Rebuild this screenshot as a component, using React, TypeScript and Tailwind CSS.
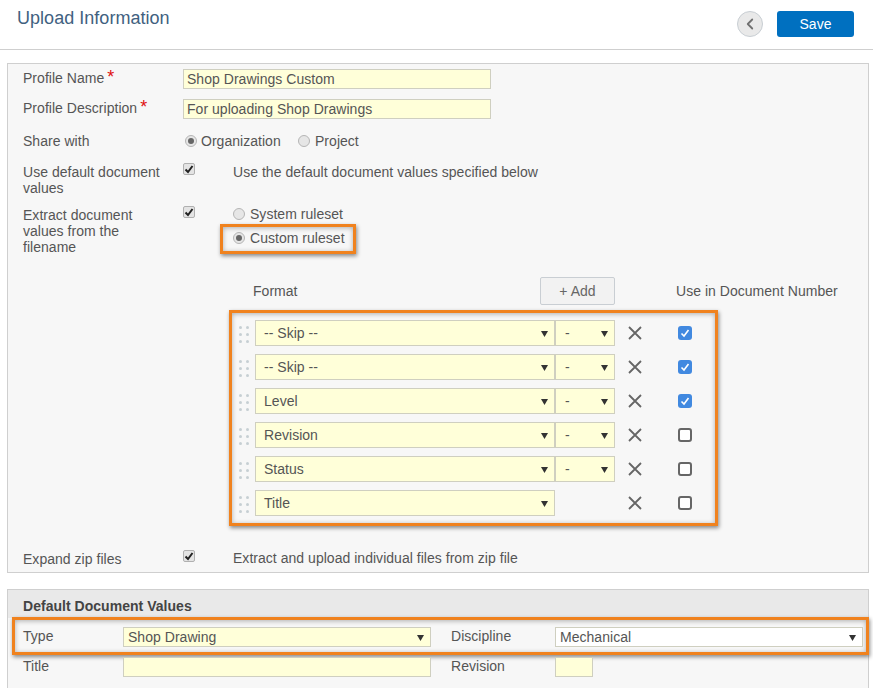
import { ChevronLeft } from "lucide-react"

const formatRows = [
  { name: "-- Skip --", sep: true, used: true },
  { name: "-- Skip --", sep: true, used: true },
  { name: "Level", sep: true, used: true },
  { name: "Revision", sep: true, used: false },
  { name: "Status", sep: true, used: false },
  { name: "Title", sep: false, used: false },
]

const orange =
  "border-[3px] border-[#f0821e] shadow-[1px_2px_4px_rgba(0,0,0,0.45),inset_0_1px_5px_rgba(0,0,0,0.3)]"

function Caret() {
  return (
    <svg width="7" height="7" viewBox="0 0 7 7" className="shrink-0">
      <polygon points="0,1 7,1 3.5,7" fill="#333" />
    </svg>
  )
}

function Required() {
  return <span className="ml-[3px] text-[18px] leading-[14px] text-[#e01010]">*</span>
}

function Radio({ on }: { on?: boolean }) {
  return (
    <span className="flex h-[12px] w-[12px] shrink-0 items-center justify-center rounded-full border border-[#b5b5b5] bg-[#e6e6e6]">
      {on && <span className="h-[6px] w-[6px] rounded-full bg-[#666]" />}
    </span>
  )
}

function GrayCheck() {
  return (
    <span className="flex h-[12px] w-[12px] shrink-0 items-center justify-center rounded-[2px] border border-[#b0b0b0] bg-[#e4e4e4]">
      <svg width="10" height="10" viewBox="0 0 10 10">
        <path d="M1.5 5.5 L4 8 L8.5 2" fill="none" stroke="#222" strokeWidth="2" />
      </svg>
    </span>
  )
}

function UseCheck({ on }: { on: boolean }) {
  if (!on) return <span className="block h-[14px] w-[14px] rounded-[3px] border-2 border-[#666] bg-white" />
  return (
    <span className="flex h-[14px] w-[14px] items-center justify-center rounded-[3px] bg-[#4189e0]">
      <svg width="10" height="10" viewBox="0 0 10 10">
        <path d="M1.5 5.5 L4 8 L8.5 2" fill="none" stroke="#fff" strokeWidth="1.6" />
      </svg>
    </span>
  )
}

function Remove() {
  return (
    <svg width="14" height="14" viewBox="0 0 14 14" className="shrink-0">
      <path d="M1 1 L13 13 M13 1 L1 13" stroke="#666" strokeWidth="1.8" />
    </svg>
  )
}

function Grip() {
  return (
    <span className="mt-[3px] grid w-[10px] shrink-0 grid-cols-2 gap-x-[4px] gap-y-[4px]">
      {[0, 1, 2, 3, 4, 5].map((i) => (
        <span key={i} className="h-[3px] w-[3px] rounded-full bg-[#c6cfd3]" />
      ))}
    </span>
  )
}

function TextInput({ value, width }: { value?: string; width: string }) {
  return (
    <div className={`flex h-[20px] items-center border border-[#cfcfc0] bg-[#ffffd9] pl-[3px] text-[#555] ${width}`}>
      {value}
    </div>
  )
}

function SmallSelect({ value, className }: { value: string; className: string }) {
  return (
    <div className={`flex items-center justify-between border border-[#cfcfc0] ${className}`}>
      <span>{value}</span>
      <Caret />
    </div>
  )
}

function Label({ children }: { children: React.ReactNode }) {
  return <div className="w-[160px] shrink-0 leading-[16px]">{children}</div>
}

export default function App() {
  return (
    <div className="h-[688px] overflow-hidden bg-white [font-family:Liberation_Sans,Arial,sans-serif] text-[14px] tracking-[0.03px] text-[#555]">
      <header className="flex h-[50px] items-start justify-between border-b border-[#cfcfcf] pl-[17px] pr-[19px]">
        <h1 className="mt-[6px] text-[18px] leading-[24px] text-[#41617f]">Upload Information</h1>
        <div className="mt-[11px] flex items-center gap-[14px]">
          <button className="flex h-[26px] w-[26px] items-center justify-center rounded-full border border-[#c8ced3] bg-[#e9e9e9]">
            <ChevronLeft size={18} strokeWidth={2.4} className="text-[#707070]" />
          </button>
          <button className="h-[26px] w-[77px] rounded-[3px] bg-[#0070c0] text-white">Save</button>
        </div>
      </header>

      <section className="mx-[7px] mt-[13px] w-[862px] border border-[#cfcfcf] bg-[#f7f7f7] pb-[5px]">
        <div className="ml-[15px] mt-[5px] flex items-center">
          <Label>
            <span className="-mt-[2px] flex items-start">
              Profile Name
              <Required />
            </span>
          </Label>
          <TextInput value="Shop Drawings Custom" width="w-[308px]" />
        </div>
        <div className="ml-[15px] mt-[10px] flex items-center">
          <Label>
            <span className="-mt-[2px] flex items-start">
              Profile Description
              <Required />
            </span>
          </Label>
          <TextInput value="For uploading Shop Drawings" width="w-[308px]" />
        </div>
        <div className="ml-[15px] mt-[12px] flex h-[20px] items-center">
          <Label>Share with</Label>
          <div className="ml-[2px] flex items-center">
            <Radio on />
            <span className="ml-[4px] w-[97px]">Organization</span>
            <Radio />
            <span className="ml-[5px]">Project</span>
          </div>
        </div>
        <div className="ml-[15px] mt-[13px] flex">
          <Label>
            Use default document
            <br />
            values
          </Label>
          <div className="-mt-px">
            <GrayCheck />
          </div>
          <span className="ml-[38px] leading-[16px]">Use the default document values specified below</span>
        </div>
        <div className="ml-[15px] mt-[11px] flex">
          <Label>
            Extract document
            <br />
            values from the
            <br />
            filename
          </Label>
          <div className="-mt-px w-[37px]">
            <GrayCheck />
          </div>
          <div>
            <div className="flex h-[14px] items-center pl-[13px]">
              <Radio />
              <span className="ml-[5px]">System ruleset</span>
            </div>
            <div className={`mt-[3px] flex h-[30px] w-[136px] items-center pb-[2px] pl-[10px] ${orange}`}>
              <Radio on />
              <span className="ml-[5px]">Custom ruleset</span>
            </div>
          </div>
        </div>

        <div className="ml-[245px] mt-[22px] flex h-[28px] items-center">
          <span className="w-[287px]">Format</span>
          <button className="h-[28px] w-[75px] rounded-[2px] border border-[#c9ced3] bg-[#f2f2f2] text-[#666]">+ Add</button>
          <span className="ml-[61px]">Use in Document Number</span>
        </div>

        <div className={`ml-[221px] mt-[5px] flex w-[489px] flex-col gap-[8px] pb-[7px] pl-[7px] pt-[7px] ${orange}`}>
          {formatRows.map((row, i) => (
            <div key={i} className="flex h-[26px] items-center">
              <Grip />
              <SmallSelect
                value={row.name}
                className="ml-[6px] h-[26px] w-[300px] bg-[#ffffd9] pl-[8px] pr-[6px]"
              />
              {row.sep ? (
                <SmallSelect value="-" className="h-[26px] w-[60px] bg-[#ffffd9] pl-[9px] pr-[6px]" />
              ) : (
                <span className="w-[60px]" />
              )}
              <span className="ml-[13px] flex w-[14px]">
                <Remove />
              </span>
              <span className="ml-[36px]">
                <UseCheck on={row.used} />
              </span>
            </div>
          ))}
        </div>

        <div className="ml-[15px] mt-[25px] flex">
          <Label>Expand zip files</Label>
          <div className="-mt-px">
            <GrayCheck />
          </div>
          <span className="ml-[38px] -mt-px leading-[16px]">Extract and upload individual files from zip file</span>
        </div>
      </section>

      <section className="mx-[7px] mt-[16px] h-[120px] w-[862px] border border-[#cfcfcf] bg-[#f7f7f7]">
        <div className="h-[28px] bg-[#e9e9e9] pl-[15px] pt-[8px] text-[14px] font-bold leading-[16px] text-[#444]">
          Default Document Values
        </div>
        <div className={`-mr-px -mt-px ml-[4px] flex items-center pb-[5px] pl-[8px] pt-[7px] ${orange}`}>
          <span className="-mt-[2px] w-[100px]">Type</span>
          <SmallSelect value="Shop Drawing" className="h-[20px] w-[308px] bg-[#ffffd9] pl-[4px] pr-[6px]" />
          <span className="-mt-[2px] ml-[20px] w-[104px]">Discipline</span>
          <SmallSelect value="Mechanical" className="h-[20px] w-[308px] bg-white pl-[4px] pr-[6px]" />
        </div>
        <div className="ml-[15px] mt-[2px] flex items-center">
          <span className="-mt-[2px] w-[100px]">Title</span>
          <TextInput width="w-[308px]" />
          <span className="-mt-[2px] ml-[20px] w-[104px]">Revision</span>
          <TextInput width="w-[38px]" />
        </div>
      </section>
    </div>
  )
}
